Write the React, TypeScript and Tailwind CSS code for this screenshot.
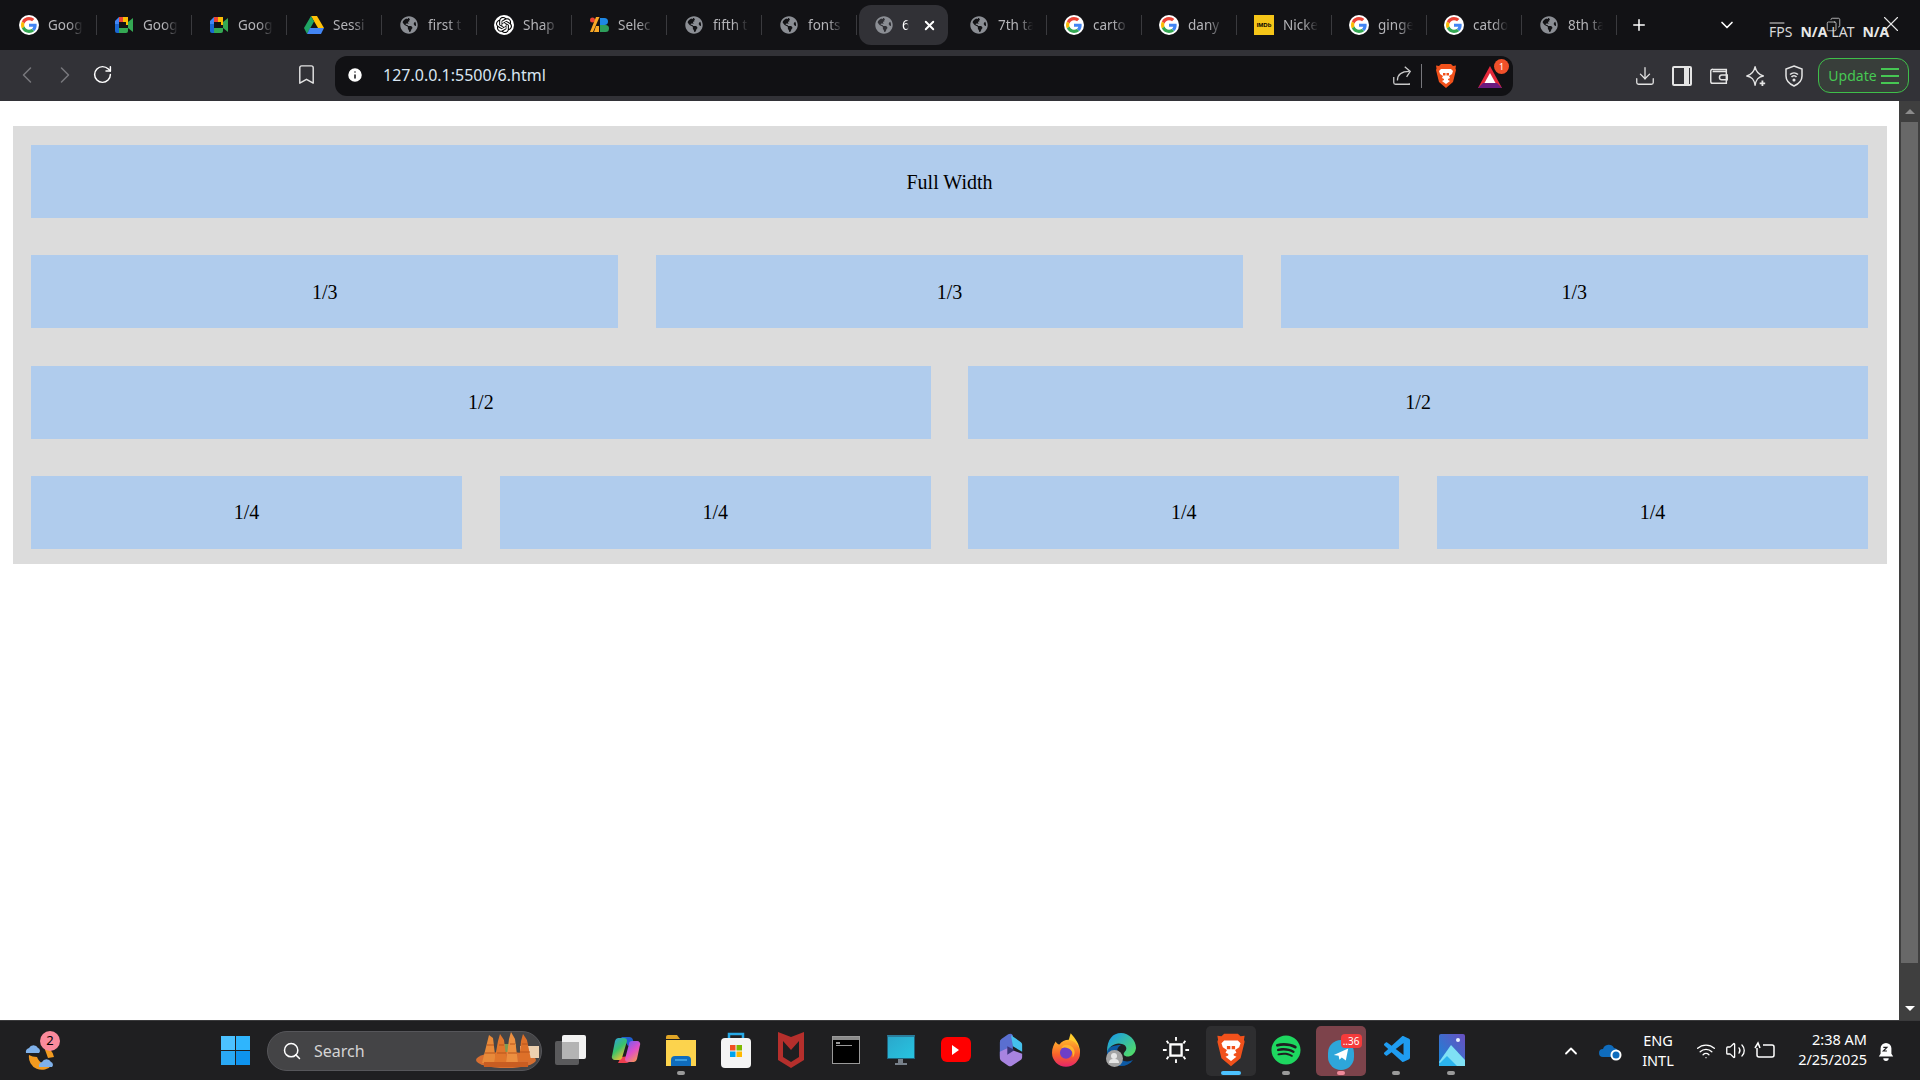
import { ReactNode } from 'react';
import { ChevronLeft, ChevronRight, ChevronDown, ChevronUp, RotateCw, Bookmark, Download, Plus, X, Search, Info, Minus, Copy, Wifi, Volume2 } from 'lucide-react';
import { FaGlobeAmericas, FaSpotify } from 'react-icons/fa';
import { SiOpenai } from 'react-icons/si';
import { VscVscode } from 'react-icons/vsc';

const UI_FONT = "font-['Noto_Sans',sans-serif]";

function GoogleIcon() {
  return (
    <span className="flex h-5 w-5 items-center justify-center rounded-full bg-white">
      <svg viewBox="0 0 48 48" className="h-4 w-4">
        <path fill="#EA4335" d="M24 9.5c3.54 0 6.71 1.22 9.21 3.6l6.85-6.85C35.9 2.38 30.47 0 24 0 14.62 0 6.51 5.38 2.56 13.22l7.98 6.19C12.43 13.72 17.74 9.5 24 9.5z" />
        <path fill="#4285F4" d="M46.98 24.55c0-1.57-.15-3.09-.38-4.55H24v9.02h12.94c-.58 2.96-2.26 5.48-4.78 7.18l7.73 6c4.51-4.18 7.09-10.36 7.09-17.65z" />
        <path fill="#FBBC05" d="M10.53 28.59c-.48-1.45-.76-2.99-.76-4.59s.27-3.14.76-4.59l-7.98-6.19C.92 16.46 0 20.12 0 24c0 3.88.92 7.54 2.56 10.78l7.97-6.19z" />
        <path fill="#34A853" d="M24 48c6.48 0 11.93-2.13 15.89-5.81l-7.73-6c-2.15 1.45-4.92 2.3-8.16 2.3-6.26 0-11.57-4.22-13.47-9.91l-7.98 6.19C6.51 42.62 14.62 48 24 48z" />
      </svg>
    </span>
  );
}

function MeetIcon() {
  return (
    <svg viewBox="0 0 20 20" className="h-5 w-5">
      <path fill="#EA4335" d="M5 2h9v5H5z" />
      <path fill="#FBBC05" d="M9 2h5v8H9z" />
      <path fill="#4285F4" d="M1 6l4-4v7H1z" />
      <path fill="#1967D2" d="M1 9h4v9H3a2 2 0 0 1-2-2z" />
      <path fill="#34A853" d="M5 13h9v3a2 2 0 0 1-2 2H5z" />
      <path fill="#34A853" d="M14 7l5-4v14l-5-4z" />
      <path fill="#111114" d="M7 7h5v6H7z" />
    </svg>
  );
}

function DriveIcon() {
  return (
    <svg viewBox="0 0 20 18" className="h-5 w-5">
      <path fill="#FFC107" d="M7 0h6l7 12h-6z" />
      <path fill="#1FA463" d="M7 0l3 5.5L3 18 0 12z" />
      <path fill="#4285F4" d="M6 12h14l-3 6H3z" />
    </svg>
  );
}

function SelectIcon() {
  return (
    <svg viewBox="0 0 20 20" className="h-5 w-5">
      <circle cx="3.500" cy="5" r="2.500" fill="#EA4335" />
      <path fill="#F9A825" d="M7 2h3.500L4 17H1z" />
      <path fill="#F9A825" d="M7 11h3v6H5z" />
      <path fill="#1E88E5" d="M11 3h4.500a3 3 0 0 1 0 7H11z" />
      <path fill="#2E9E5B" d="M11 10h5.500a3.500 3.500 0 0 1 0 7H11z" />
    </svg>
  );
}

function ImdbIcon() {
  return <span className="flex h-5 w-5 items-center justify-center bg-[#f5c518] font-['Liberation_Sans',sans-serif] text-[6px] font-bold leading-none text-black">IMDb</span>;
}

function GlobeIcon() {
  return <FaGlobeAmericas className="h-[18px] w-[18px] text-[#8b8e94]" />;
}

function OpenAiIcon() {
  return (
    <span className="flex h-5 w-5 items-center justify-center rounded-full bg-white">
      <SiOpenai className="h-4 w-4 text-black" />
    </span>
  );
}

function BraveIcon({ size = 'h-[26px] w-[22px]' }: { size?: string }) {
  return (
    <svg viewBox="0 0 22 26" className={size}>
      <path fill="#f1511b" d="M6 1h10l2 2 3-.5-.5 3L21 7l-3 12-7 6-7-6L1 7l.5-1.5-.5-3L4 3z" />
      <path fill="#fff" d="M6 6h10l2 2-1 3-3 2 1 2-2 1v1l2 1-4 3-4-3 2-1v-1l-2-1 1-2-3-2-1-3z" />
      <path fill="#f1511b" d="M8 10h2.500v2.500H8zM11.500 10H14v2.500h-2.500z" />
    </svg>
  );
}

function BatIcon() {
  return (
    <div className="relative h-[26px] w-[24px]">
      <svg viewBox="0 0 24 22" className="absolute bottom-0 left-0 h-[24px] w-[24px]">
        <path fill="#e5293a" d="M12 0L24 22H0z" />
        <path fill="#6a1b7f" d="M0 22l5-5h14l5 5z" />
        <path fill="#fff" d="M12 7l5.500 10h-11z" />
      </svg>
      <span className={`absolute -right-[7px] -top-[4px] flex h-[15px] w-[15px] items-center justify-center rounded-full bg-[#f0502a] text-[9px] leading-none text-white ${UI_FONT}`}>1</span>
    </div>
  );
}

const tabs: { icon: ReactNode; title: string; active?: boolean }[] = [
  { icon: <GoogleIcon />, title: 'Goog' },
  { icon: <MeetIcon />, title: 'Goog' },
  { icon: <MeetIcon />, title: 'Goog' },
  { icon: <DriveIcon />, title: 'Sessi' },
  { icon: <GlobeIcon />, title: 'first t' },
  { icon: <OpenAiIcon />, title: 'Shap' },
  { icon: <SelectIcon />, title: 'Selec' },
  { icon: <GlobeIcon />, title: 'fifth t' },
  { icon: <GlobeIcon />, title: 'fonts' },
  { icon: <GlobeIcon />, title: '6', active: true },
  { icon: <GlobeIcon />, title: '7th ta' },
  { icon: <GoogleIcon />, title: 'carto' },
  { icon: <GoogleIcon />, title: 'dany' },
  { icon: <ImdbIcon />, title: 'Nicke' },
  { icon: <GoogleIcon />, title: 'ginge' },
  { icon: <GoogleIcon />, title: 'catdo' },
  { icon: <GlobeIcon />, title: '8th ta' },
];

function Tab({ icon, title, active }: { icon: ReactNode; title: string; active?: boolean }) {
  if (active) {
    return (
      <div className="relative flex h-[50px] w-[95px] shrink-0 items-center">
        <div className="mx-[2px] flex h-10 w-[89px] items-center rounded-xl bg-[#313136] pl-[15px]">
          <span className="flex w-5 justify-center">{icon}</span>
          <span className="ml-[8px] w-[9px] text-sm text-white [mask-image:linear-gradient(to_right,black_45%,transparent_75%)]">{title}</span>
          <X className="ml-[11px] h-[15px] w-[15px] text-white" strokeWidth={3} />
        </div>
      </div>
    );
  }
  return (
    <div className="flex h-[50px] w-[95px] shrink-0 items-center pl-[17px]">
      <span className="flex w-5 justify-center">{icon}</span>
      <span className="ml-[9px] w-[37px] whitespace-nowrap text-[13.5px] text-[#b4b4b8] [mask-image:linear-gradient(to_right,black_55%,transparent_95%)]">{title}</span>
      <span className="ml-auto h-5 w-px bg-[#3a3a3e]" />
    </div>
  );
}

function TabStrip() {
  return (
    <div className={`relative flex h-[50px] shrink-0 items-center bg-[#121215] pl-[2px] ${UI_FONT}`}>
      {tabs.map((t, i) => (
        <Tab key={i} icon={t.icon} title={t.title} active={t.active} />
      ))}
      <Plus className="ml-[13px] h-[18px] w-[18px] text-white" strokeWidth={2} />
      <ChevronDown className="ml-[69px] h-[20px] w-[20px] text-white" strokeWidth={2} />
      {/* fps overlay sits on top of the window buttons */}
      <div className="absolute left-[1769px] top-[22px] flex items-baseline text-sm leading-5 text-[#d8d8d8]">
        <span>FPS</span>
        <span className="ml-[8px] font-bold text-[#e8e8e8]">N/A</span>
        <span className="ml-[4px]">LAT</span>
        <span className="ml-[8px] font-bold text-[#e8e8e8]">N/A</span>
      </div>
      <Minus className="absolute left-[1765px] top-[11px] h-6 w-6 text-[#e0e0e0]" strokeWidth={1} />
      <Copy className="absolute left-[1826px] top-[17px] h-[15px] w-[15px] -scale-x-100 text-[#e0e0e0]" strokeWidth={1.2} />
      <X className="absolute left-[1878px] top-[11px] h-[26px] w-[26px] text-[#e6e6e6]" strokeWidth={1} />
    </div>
  );
}

function ToolSlot({ children, className = 'w-[38px]' }: { children: ReactNode; className?: string }) {
  return <div className={`flex items-center justify-center ${className}`}>{children}</div>;
}

function Toolbar() {
  return (
    <div className={`flex h-[51px] shrink-0 items-center bg-[#323237] pl-[8px] ${UI_FONT}`}>
      <ToolSlot className="w-[38px] -translate-y-px"><ChevronLeft className="h-7 w-7 text-[#77777c]" strokeWidth={1.3} /></ToolSlot>
      <ToolSlot className="w-[38px] -translate-y-px"><ChevronRight className="h-7 w-7 text-[#77777c]" strokeWidth={1.3} /></ToolSlot>
      <ToolSlot className="w-[37px] -translate-y-px"><RotateCw className="h-[21px] w-[21px] text-white" strokeWidth={1.7} /></ToolSlot>
      <Bookmark className="ml-[174px] h-[23px] w-[23px] -translate-y-px text-[#e4e4e4]" strokeWidth={1.5} />
      <div className="ml-[17px] flex h-10 w-[1178px] items-center rounded-xl bg-[#111114] pl-[11px]">
        <Info className="h-[18px] w-[18px] -translate-y-px fill-white text-[#111114]" strokeWidth={2} />
        <span className="ml-[19px] -translate-y-px text-base text-[#d9e6f2]">127.0.0.1:5500/6.html</span>
        <svg viewBox="0 0 24 24" className="ml-auto h-[22px] w-[22px] fill-none stroke-[#c8c8c8]" strokeWidth={1.4}>
          <path d="M3 13v6a2 2 0 0 0 2 2h15v-1" />
          <path d="M7 17c0-6 4-10 13-10" />
          <path d="M15 2l6 5-4 6" />
        </svg>
        <span className="ml-[8px] h-[24px] w-px bg-[#77777c]" />
        <span className="ml-[13px] flex"><BraveIcon size="h-[26px] w-[22px]" /></span>
        <span className="ml-[21px] mr-[11px] flex"><BatIcon /></span>
      </div>
      <ToolSlot className="ml-[113px] w-[37px]"><Download className="h-[22px] w-[22px] text-[#e4e4e4]" strokeWidth={1.4} /></ToolSlot>
      <ToolSlot className="w-[37px]">
        <div className="flex h-[20px] w-[20px] overflow-hidden rounded-[2px] border-2 border-[#e4e4e4]">
          <span className="w-2/3 bg-[#323237]" />
          <span className="w-1/3 bg-[#e4e4e4]" />
        </div>
      </ToolSlot>
      <ToolSlot className="w-[37px]">
        <svg viewBox="0 0 24 24" className="h-[22px] w-[22px] fill-none stroke-[#e4e4e4]" strokeWidth={1.6}>
          <path d="M20 7V5H6a2 2 0 0 0-3 2v11a2 2 0 0 0 2 2h15V7H5" />
          <path d="M21 11h-6a2 2 0 0 0 0 5h6z" />
        </svg>
      </ToolSlot>
      <ToolSlot className="w-[38px]">
        <svg viewBox="0 0 24 24" className="h-[22px] w-[22px] fill-none stroke-[#e4e4e4]" strokeWidth={1.6}>
          <path d="M11 2c1 5 3 8 9 10-6 1-8 4-9 10-1-6-3-9-9-10 6-2 8-5 9-10z" strokeLinejoin="round" />
          <path d="M19 17v6M16 20h6" strokeWidth={2} />
        </svg>
      </ToolSlot>
      <ToolSlot className="w-[38px]">
        <svg viewBox="0 0 24 24" className="h-[24px] w-[24px] fill-none stroke-[#e4e4e4]" strokeWidth={1.5}>
          <path d="M12 2l8 3v7c0 5-3.5 8-8 10-4.500-2-8-5-8-10V5z" />
          <path d="M8 10.500a6 6 0 0 1 8 0M9.500 13a3 3 0 0 1 5 0" />
          <circle cx="12" cy="16" r="0.800" fill="#e4e4e4" />
        </svg>
      </ToolSlot>
      <div className="ml-[5px] flex h-[35px] w-[91px] items-center justify-center gap-[4px] rounded-xl border-[1.5px] border-[#3fbf4a] bg-[#383e3a] text-sm text-[#46c853]">
        <span>Update</span>
        <span className="flex w-[18px] flex-col gap-[5px]">
          <span className="h-[2px] bg-[#46c853]" />
          <span className="h-[2px] bg-[#46c853]" />
          <span className="h-[2px] bg-[#46c853]" />
        </span>
      </div>
    </div>
  );
}

function Cell({ label }: { label: string }) {
  return <div className="flex h-[73px] flex-1 items-center justify-center bg-[#b0cced] text-[20px] text-black">{label}</div>;
}

function Page() {
  return (
    <main className="flex-1 bg-white pl-[13px] pr-[12px] pt-[25px] font-['Liberation_Serif',serif]">
      <div className="flex flex-col gap-[37.3px] bg-[#dcdcdc] pb-[15px] pl-[18px] pr-[19px] pt-[19px]">
        <div className="flex"><Cell label="Full Width" /></div>
        <div className="flex gap-[37.5px]">
          <Cell label="1/3" /><Cell label="1/3" /><Cell label="1/3" />
        </div>
        <div className="flex gap-[37.5px]">
          <Cell label="1/2" /><Cell label="1/2" />
        </div>
        <div className="flex gap-[37.5px]">
          <Cell label="1/4" /><Cell label="1/4" /><Cell label="1/4" /><Cell label="1/4" />
        </div>
      </div>
    </main>
  );
}

function Scrollbar() {
  return (
    <div className="flex w-[21px] shrink-0 flex-col items-center bg-[#3f3f3f]">
      <div className="flex h-[21px] items-center justify-center">
        <span className="h-0 w-0 border-x-[5px] border-b-[5px] border-x-transparent border-b-[#8c8c8c]" />
      </div>
      <div className="h-[841px] w-[17px] bg-[#686868]" />
      <div className="mt-auto flex h-[21px] items-center justify-center pb-[2px]">
        <span className="h-0 w-0 border-x-[5px] border-t-[5px] border-x-transparent border-t-white" />
      </div>
    </div>
  );
}

function WeatherIcon() {
  return (
    <div className="relative h-[40px] w-[36px] translate-x-px">
      <svg viewBox="0 0 36 36" className="absolute bottom-0 left-0 h-[36px] w-[36px]">
        <path fill="#f29a1f" d="M5 20a13 13 0 0 0 23 10c-6 1-13-2-15-8-3 0-6-1-8-2z" />
        <path fill="#f29a1f" d="M20 12a12 12 0 0 1 10 10l-6 1z" />
        <path fill="#7fb1ea" d="M2 18a4 4 0 0 1 3-5 5 5 0 0 1 9 0 3 3 0 0 1 1 5z" />
        <path fill="#7fb1ea" d="M15 32a4 4 0 0 1 3-5 5 5 0 0 1 9 0 3 3 0 0 1 1 5z" />
      </svg>
      <span className="absolute right-0 top-0 flex h-[20px] w-[20px] items-center justify-center rounded-full bg-[#fb8a9c] text-[13px] leading-none text-black">2</span>
    </div>
  );
}

function WindowsLogo() {
  return (
    <div className="grid h-[29px] w-[29px] grid-cols-2 gap-[1.500px]">
      <span className="bg-[#4cc2ff]" /><span className="bg-[#2fb5fd]" />
      <span className="bg-[#2aa9f5]" /><span className="bg-[#0e93ee]" />
    </div>
  );
}

function SearchBox() {
  return (
    <div className="relative ml-[17px] flex h-10 w-[275px] items-center overflow-hidden rounded-full border border-[#56565a] bg-[#444446] pl-[14px]">
      <Search className="h-[20px] w-[20px] text-white" strokeWidth={1.8} />
      <span className="ml-[12px] text-base text-[#d4d4d4]">Search</span>
      <svg viewBox="0 0 64 36" className="absolute bottom-[2px] right-[1px] h-[36px] w-[64px]">
        <ellipse cx="30" cy="28" rx="30" ry="8" fill="#d76f31" />
        <path fill="#7f9a52" d="M22 12h18v8H22z" />
        <path fill="#ecd0b0" d="M44 14h19v12H44z" />
        <path fill="#e88a3a" d="M6 31l5-20 2-8 4 3 3 25z" />
        <path fill="#e0762c" d="M18 31l4-22 2-7 4 6 3 23z" />
        <path fill="#ec8f40" d="M30 31l3-24 2-7 4 7 3 24z" />
        <path fill="#dd7029" d="M43 29l2-20 2-7 4 6 4 20z" />
        <path fill="none" stroke="#b9541d" strokeWidth="1" d="M9 21h10M21 21h9M32 21h9M44 20h10M11 13h7M23 13h5M34 12h5M46 12h6" />
        <path fill="#c85d22" d="M8 30h44v5H8z" />
      </svg>
    </div>
  );
}

function CopilotIcon() {
  return (
    <svg viewBox="0 0 30 30" className="h-[30px] w-[30px]">
      <defs>
        <linearGradient id="cp1" x1="0" y1="0" x2="0.6" y2="1">
          <stop offset="0" stopColor="#2c9ce8" />
          <stop offset="0.55" stopColor="#39c26a" />
          <stop offset="1" stopColor="#f3c035" />
        </linearGradient>
        <linearGradient id="cp2" x1="0.2" y1="0" x2="0.8" y2="1">
          <stop offset="0" stopColor="#7a5cf0" />
          <stop offset="0.5" stopColor="#e04fc8" />
          <stop offset="1" stopColor="#f79a4a" />
        </linearGradient>
      </defs>
      <path fill="#1f5fd0" d="M10 2h8a4 4 0 0 1 4 3l1 4-6 2-3-5z" />
      <path fill="#ee3f4f" d="M7 28h8a4 4 0 0 0 4-3l1-4-10 1z" />
      <path fill="url(#cp1)" d="M7 3h6a3 3 0 0 1 3 3l-5 17a3 3 0 0 1-3 2H4a3 3 0 0 1-3-4L4 6a4 4 0 0 1 3-3z" />
      <path fill="url(#cp2)" d="M21 6h5a3 3 0 0 1 3 4l-3 14a4 4 0 0 1-3 3h-6a3 3 0 0 1-3-3l4-15a3 3 0 0 1 3-3z" />
    </svg>
  );
}

function ExplorerIcon() {
  return (
    <svg viewBox="0 0 30 32" className="h-[32px] w-[30px]">
      <path fill="#e0a526" d="M0 3a2 2 0 0 1 2-2h9l3 4h-14z" />
      <path fill="#fcd34d" d="M0 6h30v26H0z" />
      <path fill="#0f6cbd" d="M5 32v-6a4 4 0 0 1 4-4h12a4 4 0 0 1 4 4v6z" />
      <path fill="#3b9de0" d="M9 25h12v2H9z" />
    </svg>
  );
}

function StoreIcon() {
  return (
    <svg viewBox="0 0 30 36" className="h-[36px] w-[30px]">
      <path fill="none" stroke="#27a9e6" strokeWidth="2.500" d="M8 9V2h14v7" />
      <rect x="0" y="6" width="30" height="30" rx="4" fill="#f4f4f4" />
      <rect x="9" y="13" width="5.500" height="5.500" fill="#f25022" />
      <rect x="15.500" y="13" width="5.500" height="5.500" fill="#7fba00" />
      <rect x="9" y="19.500" width="5.500" height="5.500" fill="#00a4ef" />
      <rect x="15.500" y="19.500" width="5.500" height="5.500" fill="#ffb900" />
    </svg>
  );
}

function McAfeeIcon() {
  return (
    <svg viewBox="0 0 26 36" className="h-[36px] w-[26px]">
      <path fill="#b52f2c" fillRule="evenodd" d="M0 0l13 5 13-5v28l-13 8-13-8zM5 9v16l8 5 8-5V9l-8 9z" />
    </svg>
  );
}

function TerminalIcon() {
  return (
    <div className="h-[28px] w-[28px] border border-[#9a9a9a] bg-black">
      <div className="h-[3px] bg-[#8a8a8a]" />
      <div className="ml-[3px] mt-[2px] h-[2px] w-[4px] bg-[#9a9a9a]" />
      <div className="ml-[3px] mt-[1px] h-[1px] w-[16px] bg-[#9a9a9a]" />
    </div>
  );
}

function MonitorIcon() {
  return (
    <div className="flex flex-col items-center">
      <div className="h-[24px] w-[28px] border-x border-b border-t-2 border-x-[#20617a] border-b-[#20617a] border-t-[#2a7d9c] bg-gradient-to-br from-[#2aa8cc] to-[#27c4e0]" />
      <div className="h-[4px] w-[5px] bg-[#77808a]" />
      <div className="h-[2px] w-[12px] bg-[#77808a]" />
    </div>
  );
}

function YouTubeIcon() {
  return (
    <div className="flex h-[25px] w-[30px] items-center justify-center rounded-md bg-[#f00]">
      <span className="h-0 w-0 border-y-[5px] border-l-[7px] border-y-transparent border-l-white" />
    </div>
  );
}

function M365Icon() {
  return (
    <svg viewBox="0 0 28 36" className="h-[36px] w-[26px]">
      <path fill="#5a6fd0" d="M2 10a4 4 0 0 1 2-4l7-5a4 4 0 0 1 5 1v23l-8-4-6 4z" />
      <path fill="#45c0ec" d="M14 2l10 7a4 4 0 0 1 2 4v7l-10-6z" />
      <path fill="#a884e0" d="M2 20l8-4 16 6v4a4 4 0 0 1-2 3l-9 6a4 4 0 0 1-4 0l-7-5a4 4 0 0 1-2-3z" />
      <path fill="#3a3478" d="M10 14l8 4-8 5z" />
    </svg>
  );
}

function FirefoxIcon() {
  return (
    <svg viewBox="0 0 30 36" className="h-[36px] w-[28px]">
      <defs>
        <linearGradient id="ff" x1="0.5" y1="0" x2="0.5" y2="1">
          <stop offset="0" stopColor="#ffb52d" />
          <stop offset="0.55" stopColor="#f9622a" />
          <stop offset="1" stopColor="#e5246a" />
        </linearGradient>
      </defs>
      <path fill="#ffcb2d" d="M20 0c5 6 10 11 10 21H14z" />
      <path fill="url(#ff)" d="M4 9c1 2 2 3 4 3 2-3 6-5 10-5 7 1 12 7 12 14a15 15 0 0 1-30 0c0-5 2-9 4-12z" />
      <circle cx="15" cy="21" r="6.500" fill="#6d3fc8" />
      <path fill="#ffb52d" d="M10 16c2-4 7-5 12-1 3 3 3 8 0 11 1-5-1-9-5-10-2-1-5-1-7 0z" />
    </svg>
  );
}

function EdgeIcon() {
  return (
    <div className="relative h-[36px] w-[30px]">
      <svg viewBox="0 0 30 36" className="h-[36px] w-[30px]">
        <defs>
          <linearGradient id="ed" x1="0.2" y1="0" x2="1" y2="0.7">
            <stop offset="0" stopColor="#1b9de2" />
            <stop offset="1" stopColor="#4ed86e" />
          </linearGradient>
        </defs>
        <path fill="#0c59a4" d="M1 20c0 8 7 14 14 14 5 0 9-2 12-6-6 3-13 1-15-4-2-4-1-9 3-11-7 0-14 2-14 7z" />
        <path fill="url(#ed)" d="M15 1C7 1 1 7 1 20c2-6 9-10 15-8 4 1 5 4 4 6-1 2-3 3-2 5 2 3 11 2 12-7C30 8 23 1 15 1z" />
      </svg>
      <div className="absolute bottom-[1px] left-0 flex h-[17px] w-[17px] flex-col items-center justify-center rounded-full bg-[#a4a4a4]">
        <span className="h-[6px] w-[6px] rounded-full bg-[#e6e6e6]" />
        <span className="h-[4px] w-[10px] rounded-t-full bg-[#e6e6e6]" />
      </div>
    </div>
  );
}

function BrightnessIcon() {
  return (
    <svg viewBox="0 0 30 30" className="h-[28px] w-[28px] fill-none stroke-white" strokeWidth={2}>
      <rect x="9" y="9" width="12" height="12" strokeWidth={2.500} />
      <path d="M15 1v4M15 25v4M1 15h4M25 15h4M5 5l2 3M25 5l-2 3M5 25l2-3M25 25l-2-3" />
    </svg>
  );
}

function TelegramIcon() {
  return (
    <div className="relative h-[30px] w-[30px]">
      <div className="ml-[2px] mt-[5px] flex h-[30px] w-[26px] items-center justify-center rounded-full bg-[#2ea6da]">
        <svg viewBox="0 0 20 20" className="h-[16px] w-[16px] fill-white"><path d="M1 10L19 2l-3 15-5-4-3 3-1-5z" /></svg>
      </div>
      <span className={`absolute -right-[6px] -top-[1px] rounded-[4px] bg-[#f53b3b] px-[2px] text-[10px] leading-[14px] text-white ${UI_FONT}`}>..36</span>
    </div>
  );
}

function PhotosIcon() {
  return (
    <svg viewBox="0 0 26 32" className="h-[32px] w-[26px] translate-x-px">
      <defs>
        <linearGradient id="ph" x1="0" y1="1" x2="1" y2="0">
          <stop offset="0" stopColor="#1488d8" />
          <stop offset="1" stopColor="#6a4fc0" />
        </linearGradient>
      </defs>
      <rect width="26" height="32" rx="2" fill="url(#ph)" />
      <circle cx="19" cy="6" r="2" fill="#e8f0ff" />
      <path fill="#7fe0f5" d="M0 28L12 11l14 15v6H2z" />
      <path fill="#2bb4ee" d="M0 32v-2l8-8 10 10z" />
    </svg>
  );
}

type TaskApp = { icon: ReactNode; dot?: string; tile?: string };

const taskApps: TaskApp[] = [
  {
    icon: (
      <div className="relative h-[30px] w-[31px]">
        <div className="absolute bottom-0 left-0 h-[24px] w-[24px] rounded-[2px] bg-[#5a5a5c]" />
        <div className="absolute right-0 top-0 h-[24px] w-[24px] rounded-[2px] bg-[#f2f2f2]" />
        <div className="absolute bottom-[6px] left-[7px] h-[17px] w-[17px] bg-[#b4b4b4]" />
      </div>
    ),
  },
  { icon: <CopilotIcon /> },
  { icon: <ExplorerIcon />, dot: 'w-[8px] bg-[#9a9a9a]' },
  { icon: <StoreIcon /> },
  { icon: <McAfeeIcon /> },
  { icon: <TerminalIcon /> },
  { icon: <MonitorIcon /> },
  { icon: <YouTubeIcon /> },
  { icon: <M365Icon /> },
  { icon: <FirefoxIcon /> },
  { icon: <EdgeIcon /> },
  { icon: <BrightnessIcon /> },
  { icon: <BraveIcon size="h-[36px] w-[30px]" />, dot: 'w-[20px] bg-[#4cc2ff]', tile: 'bg-[#2e2e30]' },
  { icon: <FaSpotify className="h-[30px] w-[30px] text-[#1ed760]" />, dot: 'w-[8px] bg-[#9a9a9a]' },
  { icon: <TelegramIcon />, dot: 'w-[8px] bg-[#f08a9a]', tile: 'bg-[#7d434b]' },
  { icon: <VscVscode className="h-[32px] w-[32px] translate-x-[2px] text-[#1f9cf0]" />, dot: 'w-[8px] bg-[#9a9a9a]' },
  { icon: <PhotosIcon />, dot: 'w-[8px] bg-[#9a9a9a]' },
];

function Taskbar() {
  return (
    <footer className={`flex h-[60px] shrink-0 items-center border-t border-[#3a3a3c] bg-[#1f1f21] pl-[23px] ${UI_FONT}`}>
      <WeatherIcon />
      <div className="ml-[162px]"><WindowsLogo /></div>
      <SearchBox />
      <div className="ml-[1px] flex">
        {taskApps.map((app, i) => (
          <div key={i} className="relative flex h-[50px] w-[55px] items-center justify-center">
            {app.tile && <div className={`absolute inset-y-0 left-[3px] right-[2px] rounded-[5px] ${app.tile}`} />}
            <div className="relative flex h-[36px] -translate-y-px items-center justify-center">{app.icon}</div>
            {app.dot && <span className={`absolute bottom-[1px] h-[4px] rounded-full ${app.dot}`} />}
          </div>
        ))}
      </div>
      <ChevronUp className="ml-[83px] h-[20px] w-[20px] text-white" strokeWidth={2.2} />
      <svg viewBox="0 0 24 20" className="ml-[18px] h-[20px] w-[24px]">
        <path fill="#0f6cbd" d="M4 16a4 4 0 0 1 0-8 6 6 0 0 1 11-1 4 4 0 0 1 4 5l-3 4z" />
        <circle cx="17" cy="14" r="5.500" fill="#fff" />
        <circle cx="17" cy="14" r="3.500" fill="#0f6cbd" />
      </svg>
      <div className="ml-[16px] flex w-[38px] -translate-y-px flex-col items-center text-[14.500px] leading-[20px] text-white">
        <span>ENG</span>
        <span>INTL</span>
      </div>
      <Wifi className="ml-[19px] h-[20px] w-[20px] text-white" strokeWidth={1.6} />
      <Volume2 className="ml-[9px] h-[21px] w-[21px] text-white" strokeWidth={1.5} />
      <svg viewBox="0 0 22 20" className="ml-[8px] h-[20px] w-[22px] fill-none stroke-white" strokeWidth={1.5}>
        <path d="M9 4h9a2 2 0 0 1 2 2v8a2 2 0 0 1-2 2H5a2 2 0 0 1-2-2V7" />
        <path d="M1 7l3-5 2 5" />
      </svg>
      <div className="ml-[9px] flex w-[82px] -translate-y-[2px] flex-col items-end text-[14.500px] leading-[20px] text-white">
        <span className="whitespace-nowrap">2:38 AM</span>
        <span className="whitespace-nowrap">2/25/2025</span>
      </div>
      <svg viewBox="0 0 20 24" className="ml-[10px] h-[22px] w-[18px] fill-white">
        <path d="M10 3a6 6 0 0 1 6 6v6l2 3H2l2-3V9a6 6 0 0 1 6-6z" />
        <path d="M7 20h6a3 3 0 0 1-6 0z" />
        <path fill="none" stroke="#1f1f21" strokeWidth="1.300" d="M7 8h4l-4 4h4" />
      </svg>
    </footer>
  );
}

export default function App() {
  return (
    <div className="flex h-screen w-full flex-col overflow-hidden bg-white">
      <TabStrip />
      <Toolbar />
      <div className="flex min-h-0 flex-1">
        <Page />
        <Scrollbar />
      </div>
      <Taskbar />
    </div>
  );
}
